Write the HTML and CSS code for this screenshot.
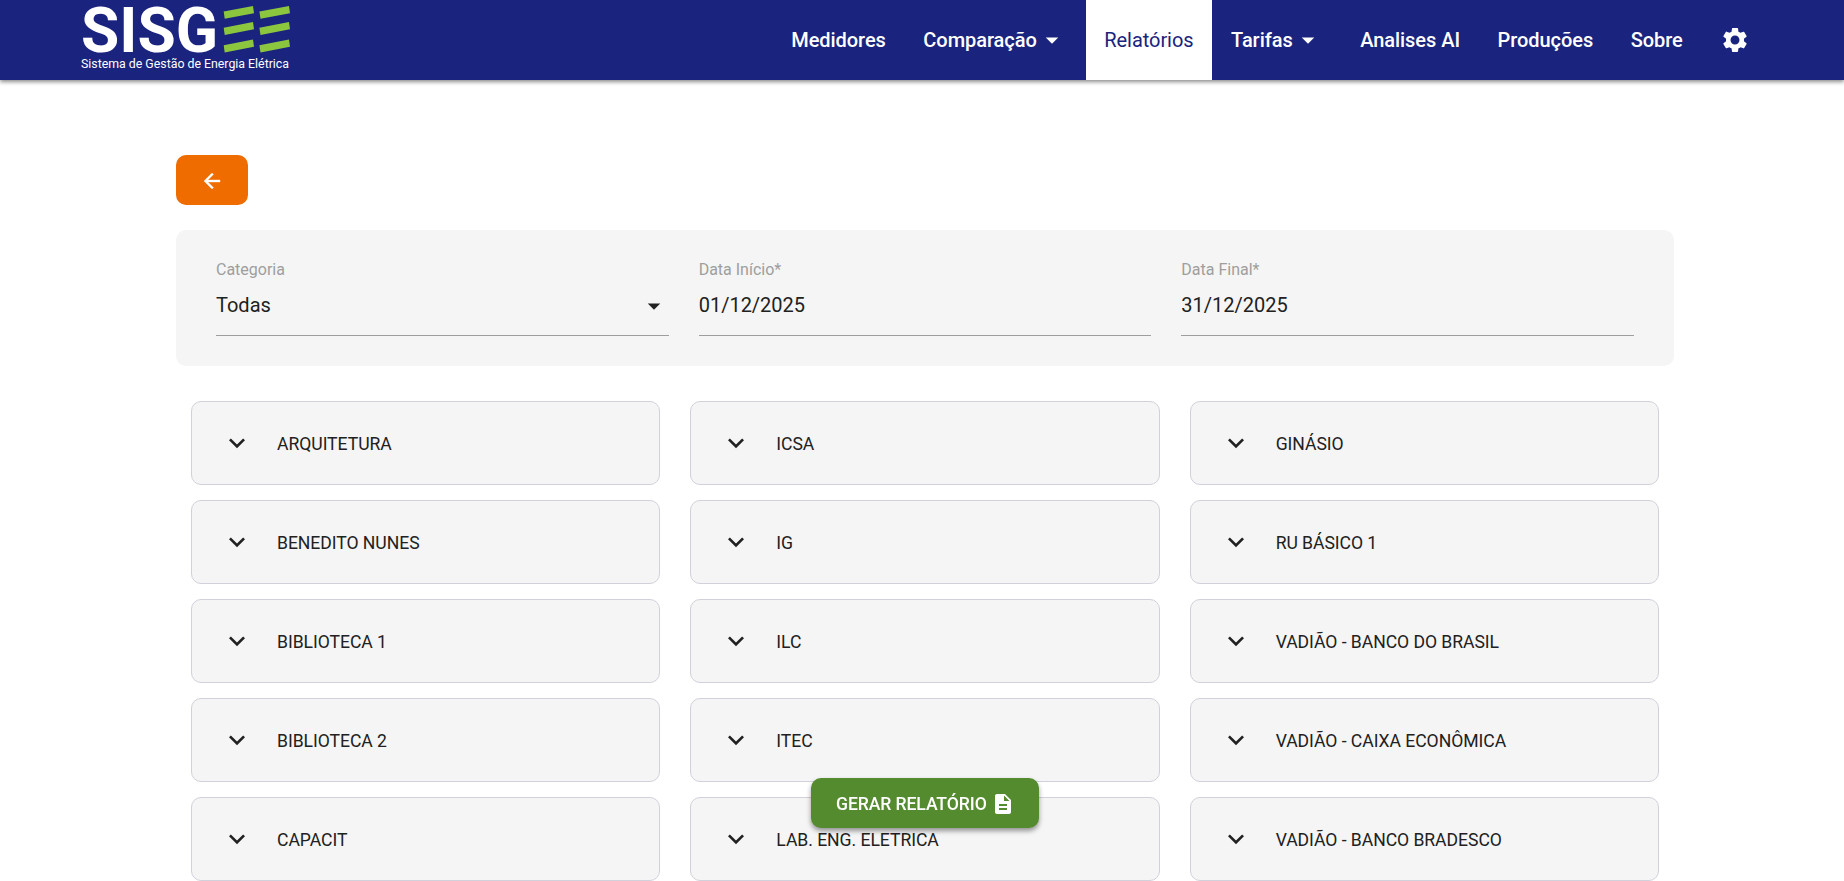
FILE: index.html
```html
<!DOCTYPE html>
<html lang="pt-BR">
<head>
  <meta charset="UTF-8">
  <meta name="viewport" content="width=device-width, initial-scale=1.0">
  <title>SISGEE - Relatórios</title>
  <link rel="stylesheet" href="styles.css">
</head>
<body>

<!-- icons used more than once -->
<svg class="sprite" width="0" height="0">
  <symbol id="chevron" viewBox="0 0 24 24"><path d="M16.59 8.59 12 13.17 7.41 8.59 6 10l6 6 6-6z"/></symbol>
  <symbol id="caret" viewBox="0 0 24 24"><path d="m7 10 5 5 5-5z"/></symbol>
</svg>

<header class="navbar">
  <a class="logo" href="#">
    <svg width="212" height="80" viewBox="0 0 212 80">
      <text class="logo-name" x="1" y="52" textLength="137" lengthAdjust="spacingAndGlyphs">SISG</text>
      <text class="logo-sub" x="1" y="68" textLength="208" lengthAdjust="spacingAndGlyphs">Sistema de Gestão de Energia Elétrica</text>
      <g class="logo-bars">
        <path d="M143.700 11.500 173 6l1 7.200-29.300 5.500z"/>
        <path d="M179.400 11.500 209 6l1 7.200-29.500 5.500z"/>
        <path d="M143.700 27.700 173 22l1 7.200-29.300 5.700z"/>
        <path d="M179.400 27.700 209 22l1 7.200-29.500 5.700z"/>
        <path d="M143.700 45.200 173 39.600l1 7.200-29.300 5.700z"/>
        <path d="M179.400 45.200 209 39.600l1 7.200-29.500 5.700z"/>
      </g>
    </svg>
  </a>
  <nav class="menu">
    <a href="#">Medidores</a>
    <a href="#">Comparação <svg class="caret"><use href="#caret"/></svg></a>
    <a href="#" class="active">Relatórios</a>
    <a href="#">Tarifas <svg class="caret"><use href="#caret"/></svg></a>
    <a href="#">Analises AI</a>
    <a href="#">Produções</a>
    <a href="#">Sobre</a>
    <a href="#" class="settings" aria-label="Configurações">
      <svg viewBox="0 0 24 24"><path d="M19.14 12.94c.04-.3.06-.61.06-.94 0-.32-.02-.64-.07-.94l2.03-1.58c.18-.14.23-.41.12-.61l-1.92-3.32c-.12-.22-.37-.29-.59-.22l-2.39.96c-.5-.38-1.03-.7-1.62-.94l-.36-2.54c-.04-.24-.24-.41-.48-.41h-3.84c-.24 0-.43.17-.47.41l-.36 2.54c-.59.24-1.13.57-1.62.94l-2.39-.96c-.22-.08-.47 0-.59.22L2.74 8.87c-.12.21-.08.47.12.61l2.03 1.58c-.05.3-.09.63-.09.94s.02.64.07.94l-2.03 1.58c-.18.14-.23.41-.12.61l1.92 3.32c.12.22.37.29.59.22l2.39-.96c.5.38 1.03.7 1.62.94l.36 2.54c.05.24.24.41.48.41h3.84c.24 0 .44-.17.47-.41l.36-2.54c.59-.24 1.13-.56 1.62-.94l2.39.96c.22.08.47 0 .59-.22l1.92-3.32c.12-.22.07-.47-.12-.61l-2.01-1.58zM12 15.6c-1.98 0-3.6-1.62-3.6-3.6s1.62-3.6 3.6-3.6 3.6 1.62 3.6 3.6-1.62 3.6-3.6 3.6z"/></svg>
    </a>
  </nav>
</header>

<main class="container">
  <a class="btn-back" href="#" aria-label="Voltar">
    <svg viewBox="0 0 24 24"><path d="M20 11H7.83l5.59-5.59L12 4l-8 8 8 8 1.41-1.41L7.83 13H20v-2z"/></svg>
  </a>

  <form class="filters">
    <div class="field">
      <label>Categoria</label>
      <div class="value">Todas <svg class="caret"><use href="#caret"/></svg></div>
    </div>
    <div class="field">
      <label>Data Início*</label>
      <div class="value">01/12/2025</div>
    </div>
    <div class="field">
      <label>Data Final*</label>
      <div class="value">31/12/2025</div>
    </div>
  </form>

  <div class="columns">
    <div class="column">
      <div class="item"><svg><use href="#chevron"/></svg><span>ARQUITETURA</span></div>
      <div class="item"><svg><use href="#chevron"/></svg><span>BENEDITO NUNES</span></div>
      <div class="item"><svg><use href="#chevron"/></svg><span>BIBLIOTECA 1</span></div>
      <div class="item"><svg><use href="#chevron"/></svg><span>BIBLIOTECA 2</span></div>
      <div class="item"><svg><use href="#chevron"/></svg><span>CAPACIT</span></div>
    </div>
    <div class="column">
      <div class="item"><svg><use href="#chevron"/></svg><span>ICSA</span></div>
      <div class="item"><svg><use href="#chevron"/></svg><span>IG</span></div>
      <div class="item"><svg><use href="#chevron"/></svg><span>ILC</span></div>
      <div class="item"><svg><use href="#chevron"/></svg><span>ITEC</span></div>
      <div class="item"><svg><use href="#chevron"/></svg><span>LAB. ENG. ELETRICA</span></div>
    </div>
    <div class="column">
      <div class="item"><svg><use href="#chevron"/></svg><span>GINÁSIO</span></div>
      <div class="item"><svg><use href="#chevron"/></svg><span>RU BÁSICO 1</span></div>
      <div class="item"><svg><use href="#chevron"/></svg><span>VADIÃO - BANCO DO BRASIL</span></div>
      <div class="item"><svg><use href="#chevron"/></svg><span>VADIÃO - CAIXA ECONÔMICA</span></div>
      <div class="item"><svg><use href="#chevron"/></svg><span>VADIÃO - BANCO BRADESCO</span></div>
    </div>
  </div>
</main>

<button class="btn-report" type="button">
  <span>GERAR RELATÓRIO</span>
  <svg viewBox="0 0 24 24"><path d="M14 2H6c-1.1 0-1.99.9-1.99 2L4 20c0 1.1.89 2 1.99 2H18c1.1 0 2-.9 2-2V8l-6-6zm2 16H8v-2h8v2zm0-4H8v-2h8v2zm-3-5V3.500L18.500 9H13z"/></svg>
</button>

</body>
</html>
```
FILE: styles.css
```css
* {
  box-sizing: border-box;
}
body {
  margin: 0;
  height: 100vh;
  overflow: hidden;
  background-color: #fff;
  color: #212121;
  font-family: Roboto, sans-serif;
}
a {
  color: inherit;
  text-decoration: none;
}
svg {
  display: block;
  fill: currentColor;
  flex-shrink: 0;
}
.sprite {
  position: absolute;
}

/* navbar */
.navbar {
  display: flex;
  justify-content: space-between;
  height: 80px;
  padding: 0 75px 0 80px;
  background-color: #1a237e;
  color: #fff;
  box-shadow: 0 2px 4px rgba(0, 0, 0, 0.45);
}
.logo svg {
  overflow: visible;
}
.logo-name {
  font-size: 63px;
  font-weight: 700;
}
.logo-sub {
  font-size: 12.5px;
}
.logo-bars {
  fill: #8cc63f;
}
.menu {
  display: flex;
}
.menu a {
  display: flex;
  align-items: center;
  padding: 0 18.75px;
  font-size: 20px;
  font-weight: 500;
  letter-spacing: -0.05px;
}
.menu a.active {
  background-color: #fff;
  color: #1a237e;
  font-weight: 400;
}
.caret {
  width: 30px;
  height: 30px;
}
.menu .settings svg {
  width: 30px;
  height: 30px;
}

/* content */
.container {
  width: 1498px;
  margin-left: 176px;
  padding-top: 75px;
}
.btn-back {
  display: flex;
  align-items: center;
  justify-content: center;
  width: 72px;
  height: 50px;
  padding-top: 1px;
  border-radius: 10px;
  background-color: #ef6c00;
  color: #fff;
}
.btn-back svg {
  width: 24px;
  height: 24px;
  stroke: currentColor;
  stroke-width: 0.4;
}
.filters {
  display: grid;
  grid-template-columns: repeat(3, 1fr);
  gap: 30px;
  height: 136px;
  margin-top: 25px;
  padding: 30px 40px;
  border-radius: 10px;
  background-color: #f5f5f5;
}
.field label {
  display: block;
  font-size: 16px;
  line-height: 20px;
  color: #9e9e9e;
}
.value {
  display: flex;
  align-items: center;
  justify-content: space-between;
  height: 56px;
  padding-bottom: 6px;
  border-bottom: 1px solid #9e9e9e;
  font-size: 20px;
}
.value .caret {
  margin-top: 2px;
}
.columns {
  display: grid;
  grid-template-columns: repeat(3, 1fr);
  gap: 30px;
  margin-top: 35px;
  padding: 0 15px;
}
.column {
  display: flex;
  flex-direction: column;
  gap: 15px;
}
.item {
  display: flex;
  align-items: center;
  gap: 24px;
  height: 84px;
  padding-left: 29px;
  border: 1px solid #d1d1db;
  border-radius: 10px;
  background-color: #f5f5f5;
  font-size: 17.6px;
  letter-spacing: -0.05px;
}
.item span {
  padding-top: 2px;
}
.item svg {
  width: 32px;
  height: 32px;
}

/* floating action */
.btn-report {
  position: fixed;
  left: 811px;
  bottom: 53px;
  display: flex;
  align-items: center;
  justify-content: space-between;
  width: 228px;
  height: 50px;
  padding: 1px 24px 0 25px;
  border: none;
  border-radius: 10px;
  background-color: #558b2f;
  color: #fff;
  font-family: inherit;
  font-size: 17.6px;
  font-weight: 500;
  letter-spacing: -0.1px;
  box-shadow: 0 3px 5px rgba(0, 0, 0, 0.4);
}
.btn-report svg {
  width: 24px;
  height: 24px;
}
```
